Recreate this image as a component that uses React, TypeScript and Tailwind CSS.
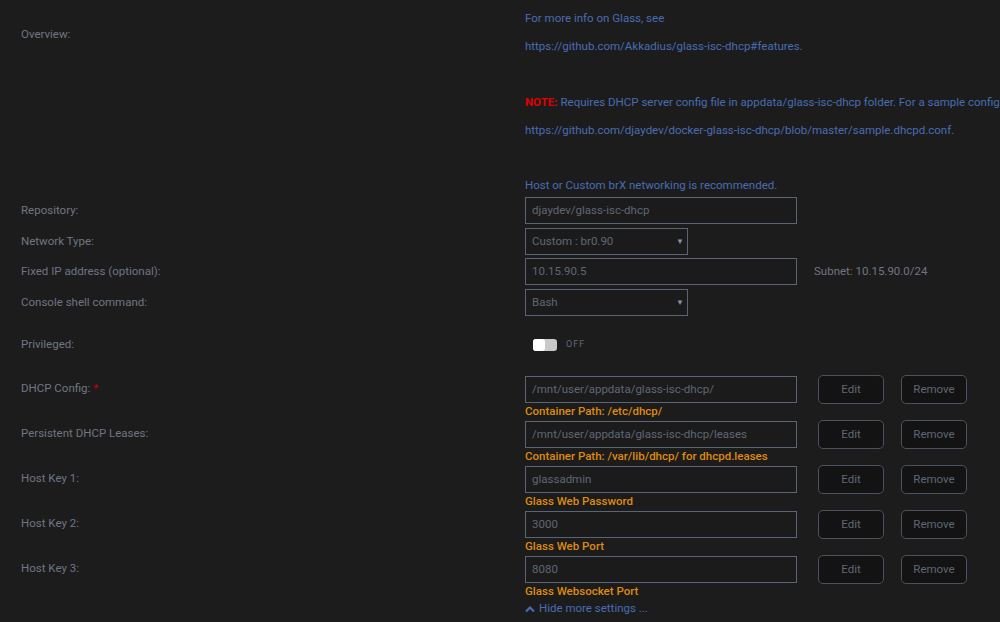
import React from "react";

const font = { fontFamily: "Roboto, 'Liberation Sans', sans-serif" };

function Label({ children }: { children: React.ReactNode }) {
  return <div className="w-[504px] shrink-0 text-[11.5px] text-[#6f7682]">{children}</div>;
}

function TextInput({ value }: { value: string }) {
  return (
    <div className="w-[272px] h-[27px] border border-[#5a6472] bg-[#1b1b1b] flex items-center pl-[6px] text-[11.5px] text-[#5f6773]">
      {value}
    </div>
  );
}

function Select({ value }: { value: string }) {
  return (
    <div className="w-[163px] h-[27px] border border-[#5a6472] bg-[#1b1b1b] flex items-center justify-between pl-[6px] pr-[3px] text-[11.5px] text-[#5f6773]">
      <span>{value}</span>
      <span className="text-[8px] text-[#8a929e]">▼</span>
    </div>
  );
}

function Btn({ children, w }: { children: React.ReactNode; w: string }) {
  return (
    <div className={`${w} h-[29px] rounded-[5px] border border-[#4a525d] bg-[#131313] flex items-center justify-center text-[11.5px] text-[#5f6773]`}>
      {children}
    </div>
  );
}

function PathRow({ label, value, caption, star }: { label: string; value: string; caption: string; star?: boolean }) {
  return (
    <div className="flex items-start">
      <div className="w-[504px] shrink-0 h-[27px] flex items-center text-[11.5px] text-[#6f7682]">
        {label}
        {star && <span className="text-[#c00] ml-[3px]">*</span>}
      </div>
      <div className="flex flex-col">
        <div className="flex items-center">
          <TextInput value={value} />
          <div className="ml-[21px]">
            <Btn w="w-[66px]">Edit</Btn>
          </div>
          <div className="ml-[17px]">
            <Btn w="w-[66px]">Remove</Btn>
          </div>
        </div>
        <div className="h-[17px] -mt-[1px] flex items-center text-[11.5px] font-medium text-[#df8a0e]">{caption}</div>
      </div>
    </div>
  );
}

export default function App() {
  return (
    <div className="w-[1000px] h-[622px] overflow-hidden bg-[#1c1c1c] pl-[21px]" style={font}>
      {/* Overview */}
      <div className="flex items-start pt-[5px]">
        <div className="w-[504px] shrink-0 pt-[21px] text-[11.5px] text-[#6f7682]">Overview:</div>
        <div className="text-[11.5px] text-[#4a6cb3] whitespace-nowrap">
          <div className="h-[28px] flex items-center">For more info on Glass, see</div>
          <div className="h-[28px] flex items-center">https://github.com/Akkadius/glass-isc-dhcp#features.</div>
          <div className="h-[28px]" />
          <div className="h-[28px] flex items-center">
            <span className="text-[#e00000] font-bold mr-[3px]">NOTE:</span>
            Requires DHCP server config file in appdata/glass-isc-dhcp folder. For a sample config file, see
          </div>
          <div className="h-[28px] flex items-center">https://github.com/djaydev/docker-glass-isc-dhcp/blob/master/sample.dhcpd.conf.</div>
          <div className="h-[28px]" />
          <div className="h-[24px] pt-[2px] flex items-center">Host or Custom brX networking is recommended.</div>
        </div>
      </div>

      <div className="flex items-center">
        <Label>Repository:</Label>
        <TextInput value="djaydev/glass-isc-dhcp" />
      </div>
      <div className="flex items-center mt-[4px]">
        <Label>Network Type:</Label>
        <Select value="Custom : br0.90" />
      </div>
      <div className="flex items-center mt-[3px]">
        <Label>Fixed IP address (optional):</Label>
        <TextInput value="10.15.90.5" />
        <div className="ml-[17px] text-[11.5px] text-[#6f7682]">Subnet: 10.15.90.0/24</div>
      </div>
      <div className="flex items-center mt-[4px]">
        <Label>Console shell command:</Label>
        <Select value="Bash" />
      </div>
      <div className="flex items-center mt-[16px] h-[26px]">
        <Label>Privileged:</Label>
        <div className="ml-[8px] w-[24px] h-[12px] rounded-[3px] bg-[#c9c9c9] relative">
          <div className="absolute left-0 top-0 w-[12px] h-[12px] rounded-[3px] bg-white" />
        </div>
        <div className="ml-[9px] text-[9px] tracking-[1px] text-[#5f6773]">OFF</div>
      </div>

      <div className="flex flex-col mt-[17px]">
        <PathRow label="DHCP Config:" star value="/mnt/user/appdata/glass-isc-dhcp/" caption="Container Path: /etc/dhcp/" />
        <PathRow label="Persistent DHCP Leases:" value="/mnt/user/appdata/glass-isc-dhcp/leases" caption="Container Path: /var/lib/dhcp/ for dhcpd.leases" />
        <PathRow label="Host Key 1:" value="glassadmin" caption="Glass Web Password" />
        <PathRow label="Host Key 2:" value="3000" caption="Glass Web Port" />
        <PathRow label="Host Key 3:" value="8080" caption="Glass Websocket Port" />
      </div>
      <div className="flex">
        <div className="w-[504px] shrink-0" />
        <div className="flex items-center text-[11.5px] text-[#4a6cb3]">
          <svg width="10" height="8" viewBox="0 0 10 8" className="mr-[4px]">
            <path d="M1 6.5 L5 2.5 L9 6.5" stroke="#4a6cb3" strokeWidth="2.2" fill="none" />
          </svg>
          Hide more settings ...
        </div>
      </div>
    </div>
  );
}
